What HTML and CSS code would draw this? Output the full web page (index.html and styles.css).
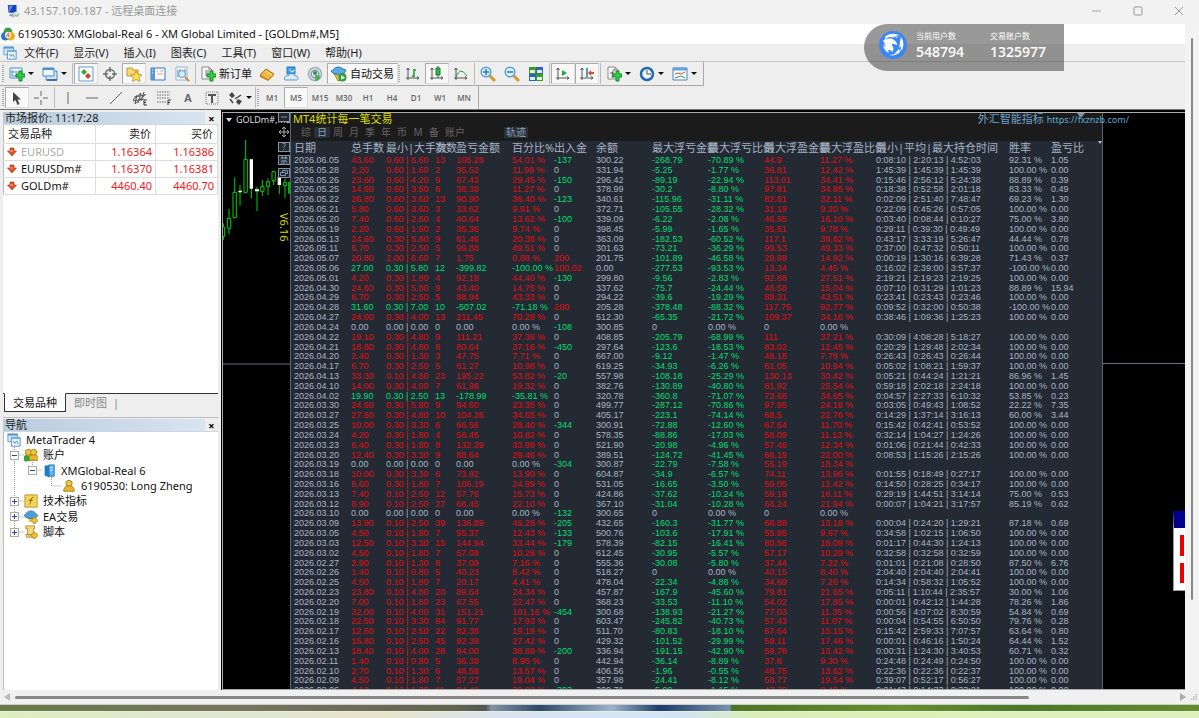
FILE: index.html
```html
<!DOCTYPE html>
<html lang="zh-CN">
<head>
<meta charset="utf-8">
<title>43.157.109.187 - 远程桌面连接</title>
<link rel="stylesheet" href="styles.css">
</head>
<body>
<header class="rdp-bar">
  <svg class="i14" viewBox="0 0 16 16"><path d="M2 1h10v9H3z" fill="#1b3fb4"/><path d="M3 2h5l-4 7z" fill="#5a8af0"/><path d="M5 11h6l3 2-5 2-6-2z" fill="#9aa5b5"/><circle cx="12" cy="12" r="3.5" fill="#d5e8d8"/><path d="M10 12l2 2 3-3" stroke="#4a9a5a" fill="none"/></svg>
  <span>43.157.109.187 - 远程桌面连接</span>
  <div class="win-ctl">
    <button aria-label="最小化"><svg viewBox="0 0 10 10"><path d="M0 5h9" stroke="#aaa" fill="none"/></svg></button>
    <button aria-label="最大化"><svg viewBox="0 0 10 10"><rect x="1" y="1" width="8" height="8" rx="1" stroke="#999" fill="none"/></svg></button>
    <button aria-label="关闭"><svg viewBox="0 0 10 10"><path d="M1 1l8 8M9 1l-8 8" stroke="#999" fill="none"/></svg></button>
  </div>
</header>

<div class="viewport">
<div class="terminal">
  <div class="app-title">
    <svg class="i14" viewBox="0 0 16 16"><circle cx="8" cy="5.500" r="5" fill="#3f9b4c"/><circle cx="5" cy="10.500" r="5" fill="#2d78c4"/><circle cx="11" cy="10.500" r="5" fill="#e8b020"/><circle cx="8" cy="9" r="3.500" fill="#fff4e4"/><path d="M8.500 6.500L6 10h4M8.500 6.500v5" stroke="#e07020" fill="none"/></svg>
    <h1>6190530: XMGlobal-Real 6 - XM Global Limited - [GOLDm#,M5]</h1>
  </div>
  <nav class="menu">
    <svg class="i14" viewBox="0 0 16 16"><use href="#windows"/></svg>
    <button>文件(F)</button><button>显示(V)</button><button>插入(I)</button><button>图表(C)</button><button>工具(T)</button><button>窗口(W)</button><button>帮助(H)</button>
  </nav>

  <div class="toolbar tall">
    <i class="grip"></i>
    <button class="dd" aria-label="新图表"><svg viewBox="0 0 16 16"><path d="M1 2h12v10H1z" fill="#eef6fd" stroke="#4d8fc8"/><path d="M3 4v6h8M3 6h6" stroke="#4d8fc8" fill="none"/><use href="#plus"/></svg></button>
    <button class="dd" aria-label="配置文件"><svg viewBox="0 0 16 16"><path d="M4 5h11v9H4z" fill="#cfe2f5" stroke="#4d8fc8"/><path d="M1 2h11v8H1z" fill="#eef6fd" stroke="#4d8fc8"/><path d="M1 3h11" stroke="#4d8fc8" stroke-width="2"/><path d="M5 14h10" stroke="#3c75aa" stroke-width="2"/></svg></button>
    <i class="sep"></i>
    <button class="on" aria-label="市场报价"><svg viewBox="0 0 16 16"><path d="M1 1h14v14H1z" fill="#fff" stroke="#5f9bd3"/><path d="M6 3l3 3-3 3-3-3z" fill="#2aa83a"/><path d="M10 7l3 3-3 3-3-3z" fill="#d0402a"/></svg></button>
    <button aria-label="数据窗口"><svg viewBox="0 0 16 16"><g stroke="#6d6d6d" fill="none"><circle cx="8" cy="8" r="4.500" stroke-width="1.500"/><path d="M8 1v5M8 10v5M1 8h5M10 8h5" stroke-width="1.500"/></g></svg></button>
    <button class="on" aria-label="导航"><svg viewBox="0 0 16 16"><path d="M1 2h5l1 2h5v6H1z" fill="#f7d774" stroke="#c9973a"/><path d="M10 5l2 3.500 4 .5-3 2.500 1 4-4-2-3.500 2 .8-4L4.500 9 8.500 8.500z" fill="#fbe04a" stroke="#b8862a" stroke-width=".8"/></svg></button>
    <button aria-label="终端"><svg viewBox="0 0 16 16"><path d="M1 2h14v12H1z" fill="#f4f9fe" stroke="#3d78b8"/><path d="M1 2h4v12H1z" fill="#5c96d0"/><path d="M2 4h1M2 7h1M7 5h1" stroke="#fff"/><path d="M7 5h1M10 5h3M7 8h6" stroke="#d8a48c"/></svg></button>
    <button aria-label="策略测试"><svg viewBox="0 0 16 16"><path d="M2 1h11v13H2z" fill="#eef5fb" stroke="#9ab5cd"/><path d="M4 4v7M6 3v5M11 3v4" stroke="#5d8fbe"/><circle cx="8" cy="8" r="3.500" fill="#d6ebfa" stroke="#6696bd"/><path d="M11 11l4 4" stroke="#c8922b" stroke-width="2"/></svg></button>
    <i class="sep"></i>
    <button class="labelled"><svg viewBox="0 0 16 16"><use href="#sheet"/><path d="M5 5h4M5 7h4M5 9h3" stroke="#777"/><use href="#plus"/></svg>新订单</button>
    <button aria-label="MetaEditor"><svg viewBox="0 0 16 16"><path d="M1 9l6-6 8 5-6 6z" fill="#f0b93c" stroke="#a8701c"/><path d="M1 9v2l8 4 6-6V8l-6 6z" fill="#c98720"/><path d="M6 5l7 4" stroke="#fbe09a"/></svg></button>
    <button aria-label="虚拟主机"><svg viewBox="0 0 16 16"><path d="M4 1h8v7H4z" fill="#3fa0ea" stroke="#2a78bb"/><path d="M6 3l3 3 3-2" stroke="#fff" fill="none"/><path d="M2 14c-2-3 1-5 3-4 1-3 6-3 7 0 3-1 4 3 2 4z" fill="#dcebf8" stroke="#5b95cc"/></svg></button>
    <button aria-label="信号"><svg viewBox="0 0 16 16"><g fill="none"><circle cx="8" cy="8" r="6.500" stroke="#9fb0b8" stroke-width="1.600"/><circle cx="8" cy="8" r="3.800" stroke="#7c9cb0" stroke-width="1.600"/></g><circle cx="8" cy="7" r="2" fill="#3a8e4e"/><path d="M8 8v7h2c3-2 3-3 3-5z" fill="#53ad62"/></svg></button>
    <button class="labelled on"><svg viewBox="0 0 16 16"><path d="M3 7l5 3 6-3-2 7-5 1z" fill="#f0c33c" stroke="#a98322"/><path d="M0 5c2 0 3-4 7-4s5 3 8 3c-1 5-13 6-15 1z" fill="#5aa9e2" stroke="#2b74a8"/><circle cx="11.500" cy="11.500" r="4" fill="#22a436"/><path d="M10.200 9.200l4 2.300-4 2.300z" fill="#fff"/></svg>自动交易</button>
    <i class="grip"></i>
    <button aria-label="柱状图"><svg viewBox="0 0 16 16"><use href="#axes"/><path d="M9 3v8M9 4h2M7 10h2" stroke="#279537" stroke-width="1.500"/></svg></button>
    <button class="on" aria-label="阴阳烛"><svg viewBox="0 0 16 16"><use href="#axes"/><path d="M9 0v12" stroke="#1a7b28"/><path d="M7 2h4v7H7z" fill="#2eb944" stroke="#1a7b28"/></svg></button>
    <button aria-label="折线图"><svg viewBox="0 0 16 16"><use href="#axes"/><path d="M3 11c3-7 6-8 11-1" stroke="#279537" fill="none"/></svg></button>
    <i class="sep"></i>
    <button aria-label="放大"><svg viewBox="0 0 16 16"><use href="#lens"/><path d="M6 3v6M3 6h6" stroke="#2f77b5" stroke-width="1.500"/></svg></button>
    <button aria-label="缩小"><svg viewBox="0 0 16 16"><use href="#lens"/><path d="M3 6h6" stroke="#2f77b5" stroke-width="1.500"/></svg></button>
    <button aria-label="平铺"><svg viewBox="0 0 16 16"><path d="M1 1h7v7H1zM8 8h7v7H8z" fill="#3c9b28"/><path d="M8 1h7v7H8zM1 8h7v7H1z" fill="#2d62c0"/><path d="M2 4h5v3H2zM9 4h5v3H9zM2 11h5v3H2zM9 11h5v3H9z" fill="#dff0dc"/></svg></button>
    <i class="sep"></i>
    <button class="on" aria-label="自动滚动"><svg viewBox="0 0 16 16"><use href="#axes"/><path d="M7 4l5 3-5 3z" fill="#2aa53a"/></svg></button>
    <button class="on" aria-label="图表平移"><svg viewBox="0 0 16 16"><use href="#axes"/><path d="M8 2v9" stroke="#2c6fb0" stroke-width="1.500"/><path d="M9 7l3-3v2h3v2h-3v2z" fill="#d0502c"/></svg></button>
    <i class="sep"></i>
    <button class="dd" aria-label="指标"><svg viewBox="0 0 16 16"><use href="#sheet"/><path d="M9 4c-3-1-2 3-3 8M4 7h4" stroke="#555" fill="none"/><use href="#plus"/></svg></button>
    <button class="dd" aria-label="周期"><svg viewBox="0 0 16 16"><circle cx="8" cy="8" r="6" fill="#eef5fc" stroke="#2467b4" stroke-width="2.500"/><path d="M8 4v4h4" stroke="#555" fill="none"/></svg></button>
    <button class="dd" aria-label="模板"><svg viewBox="0 0 16 16"><path d="M1 2h14v12H1z" fill="#f6fafe" stroke="#4d86bd"/><path d="M1 3h14" stroke="#6aa3d8" stroke-width="3"/><path d="M3 8l3-1 3 1 4-2" stroke="#c45a3a" fill="none"/><path d="M3 12l3-1 3-1 4 2" stroke="#3a9a4a" fill="none"/></svg></button>
  </div>

  <div class="toolbar low">
    <i class="grip"></i>
    <button class="on" aria-label="光标"><svg viewBox="0 0 16 16"><path d="M4 2v10l2.500-2 2 5 2-1-2-4.500H12z" fill="#444"/></svg></button>
    <button aria-label="十字准线"><svg viewBox="0 0 16 16"><path d="M8 1v5M8 10v5M1 8h5M10 8h5" stroke="#666"/></svg></button>
    <i class="sep"></i>
    <button aria-label="垂直线"><svg viewBox="0 0 16 16"><path d="M8 2v12" stroke="#666"/></svg></button>
    <button aria-label="水平线"><svg viewBox="0 0 16 16"><path d="M2 8h12" stroke="#666"/></svg></button>
    <button aria-label="趋势线"><svg viewBox="0 0 16 16"><path d="M2 14L14 2" stroke="#666"/></svg></button>
    <button aria-label="等距通道"><svg viewBox="0 0 16 16"><path d="M1 10L9 3M3 14L14 4M2 7l11-2M1 11l11-2M5 5l-2 9M9 3L6 13M12 2L9 11" stroke="#555" fill="none"/><path d="M15 10h-3v5h3M12 12.500h2" stroke="#333" fill="none"/></svg></button>
    <button aria-label="斐波那契"><svg viewBox="0 0 16 16"><path d="M1 2h13M1 5h13M1 8h13M1 12h9" stroke="#666" stroke-dasharray="1.500 1"/><path d="M15 10h-3v5M12 12.500h2" stroke="#333" fill="none"/></svg></button>
    <button class="letter">A</button>
    <button aria-label="文本标签"><svg viewBox="0 0 16 16"><path d="M2 2h12v12H2z" stroke="#777" stroke-dasharray="1 1" fill="none"/><path d="M4 5h8M8 5v8" stroke="#555" stroke-width="2"/></svg></button>
    <button class="dd" aria-label="箭头"><svg viewBox="0 0 16 16"><path d="M5 2l3 4-3 2-3-3zM11 9l4 2-3 4-3-3z" fill="#444"/><path d="M3 9l3 4M8 9l6-4" stroke="#444" stroke-width="1.500"/></svg></button>
    <i class="sep"></i>
    <i class="grip"></i>
    <button>M1</button><button class="on">M5</button><button>M15</button><button>M30</button><button>H1</button><button>H4</button><button>D1</button><button>W1</button><button>MN</button>
  </div>

  <main class="work">
    <aside class="dock">
      <section class="quotes">
        <header class="pane-title"><h2>市场报价: 11:17:28</h2><button aria-label="关闭市场报价">×</button></header>
        <table>
          <thead><tr><th>交易品种</th><th>卖价</th><th>买价</th></tr></thead>
          <tbody>
            <tr class="dim"><td><svg viewBox="0 0 10 10"><use href="#down"/></svg>EURUSD</td><td>1.16364</td><td>1.16386</td></tr>
            <tr><td><svg viewBox="0 0 10 10"><use href="#down"/></svg>EURUSDm#</td><td>1.16370</td><td>1.16381</td></tr>
            <tr><td><svg viewBox="0 0 10 10"><use href="#down"/></svg>GOLDm#</td><td>4460.40</td><td>4460.70</td></tr>
          </tbody>
        </table>
        <div class="dock-tabs"><button class="cur">交易品种</button><button>即时图</button></div>
      </section>
      <section class="navigator">
        <header class="pane-title"><h2>导航</h2><button aria-label="关闭导航">×</button></header>
        <div class="tree">
          <svg class="branches" viewBox="0 0 70 108" preserveAspectRatio="none"><path d="M10.500 15v86M10.500 23h10M10.500 69h10M10.500 85h10M10.500 100h10M28.500 30v8h10M47.500 45v9h10" fill="none" stroke="#999" stroke-dasharray="1 1"/></svg>
          <ul>
            <li class="l0"><svg class="i14" viewBox="0 0 16 16"><use href="#windows"/></svg>MetaTrader 4</li>
            <li class="l1"><b class="box minus"></b><svg class="i14" viewBox="0 0 16 16"><g transform="translate(-3 0)"><use href="#person"/></g><g transform="translate(3 0)"><use href="#person"/></g><circle cx="3" cy="12" r="3.500" fill="#35a53c"/></svg>账户</li>
            <li class="l2"><b class="box minus"></b><svg class="i14" viewBox="0 0 16 16"><path d="M3 2l5-1v14l-5-2z" fill="#1f7cc4"/><path d="M8 1h6v13H8z" fill="#5bb4f0" stroke="#2779b4"/><path d="M9 4h3M9 7h3" stroke="#fff"/></svg>XMGlobal-Real 6</li>
            <li class="l3"><svg class="i14" viewBox="0 0 16 16"><use href="#person"/></svg>6190530: Long Zheng</li>
            <li class="l1"><b class="box plus"></b><svg class="i14" viewBox="0 0 16 16"><path d="M1 1h14v14H1z" fill="#f5d657" stroke="#b58d24"/><path d="M11 4c-4-1-2 5-5 8M5 7h5" stroke="#6b5417" fill="none"/></svg>技术指标</li>
            <li class="l1"><b class="box plus"></b><svg class="i14" viewBox="0 0 16 16"><path d="M4 9h8l-2 5H6z" fill="#f0cb58"/><path d="M0 6c2 0 3-5 8-5s6 5 8 5c-2 5-14 5-16 0z" fill="#4c9fd6" stroke="#2f75a5"/><path d="M12 8l4 4-4 4-4-4z" fill="#f1bf31" stroke="#a97d1b"/></svg>EA交易</li>
            <li class="l1"><b class="box plus"></b><svg class="i14" viewBox="0 0 16 16"><path d="M2 1h10v3h-1v7H4V4H2zM2 11h9v3H3z" fill="#f3d878" stroke="#b48c2c"/><path d="M12 8l4 4-4 4-4-4z" fill="#f1bf31" stroke="#a97d1b"/></svg>脚本</li>
          </ul>
        </div>
      </section>
    </aside>

    <section class="chart">
      <div class="candles">
        <svg class="plot" viewBox="672 24 201 1728" preserveAspectRatio="none">
          <path d="M672 777h201" stroke="#66768a" stroke-width="3"/>
          <g stroke="#00d000" stroke-width="3" fill="#000">
            <path d="M673 355v50M690 312v75M707 218v122M723 240v62M740 105v160M757 163v117M774 245v73M790 225v48M807 220v50M824 197v44M841 215v52M858 220v60"/>
            <path d="M669 366h8v28h-8zM685 340h10v30h-10zM702 262h10v76h-10zM735 163h10v99h-10zM785 245h10v14h-10zM802 230h10v14h-10zM819 200h10v27h-10zM853 232h10v10h-10z"/>
            <path d="M870 230v36" stroke-width="5"/>
          </g>
          <path d="M752 163h10v88h-10zM718 257h11v5h-11zM768 253h12v6h-12zM836 215h10v25h-10z" fill="#fff"/>
        </svg>
        <span class="symbol">GOLDm#,M5</span>
        <div class="side-tools">
          <button aria-label="收起"><svg viewBox="0 0 12 10"><path d="M.5.5h11v9H.5z"/><path d="M3 5h6"/></svg></button>
          <button class="move" aria-label="移动"><svg viewBox="0 0 12 12"><path d="M6 1v10M1 6h10M4 3l2-2 2 2M4 9l2 2 2-2M3 4L1 6l2 2M9 4l2 2-2 2"/></svg></button>
          <button class="boxed">?</button>
          <button class="boxed">禁</button>
          <button aria-label="还原"><svg viewBox="0 0 12 10"><path d="M.5.5h11v9H.5zM4.500 2.500h5v3h-5z"/><path d="M2.500 4.500h5v3h-5z" fill="#1d2733"/></svg></button>
        </div>
        <span class="version">V6.16</span>
      </div>

      <div class="report">
        <header class="report-head">
          <div class="report-title"><h2>MT4统计每一笔交易</h2></div>
          <div class="periods">
            <button>综</button><button class="cur">日</button><button>周</button><button>月</button><button>季</button><button>年</button><button>币</button><button>M</button><button>备</button><button class="wide">账户</button><button class="cur track">轨迹</button>
          </div>
        </header>
        <table class="stats">
          <thead><tr><th>日期</th><th>总手数</th><th>最小|大手数</th><th>次数</th><th>盈亏金额</th><th>百分比%</th><th>出入金</th><th>余额</th><th>最大浮亏金额</th><th>最大浮亏比例</th><th>最大浮盈金额</th><th>最大浮盈比例</th><th>最小|平均|最大持仓时间</th><th>胜率</th><th>盈亏比</th></tr></thead>
          <tbody id="rows"></tbody>
        </table>
      </div>
      <div class="margin">
        <div class="site">外汇智能指标 <a href="#">https://fxznzb.com/</a></div>
        <svg class="marker" viewBox="0 0 8 5"><path d="M0 0h8L4 5z" fill="#8394a4"/></svg>
        <svg class="scroll-mark" viewBox="0 0 4 3"><path d="M0 0h4L2 3z" fill="#b8c0c8"/></svg>
        <div class="alert"><i></i><i></i></div>
      </div>
    </section>
  </main>
</div>
<div class="vscroll"><i></i></div>
</div>
<footer class="hscroll"><svg viewBox="0 0 6 8"><path d="M6 0v8L0 4z" fill="#bbb"/></svg><i></i><svg viewBox="0 0 6 8"><path d="M0 0v8l6-4z" fill="#aaa"/></svg><svg viewBox="0 0 8 8"><path d="M6 0h2v2H6zM3 3h2v2H3zM6 3h2v2H6zM0 6h2v2H0zM3 6h2v2H3zM6 6h2v2H6z" fill="#bbb"/></svg></footer>
<div class="wallpaper"></div>
<div class="taskbar"></div>

<aside class="badge">
  <svg viewBox="0 0 28 28"><circle cx="14" cy="14" r="14" fill="#3b86f7"/><path d="M6 6c4-4 11-4 15-1l-4-1 2 3-5-2 1 2c-4-2-7-1-9 2z" fill="#fff"/><path d="M4 10c3-3 8-3 11-1 2 1 3 3 3 5l-3-1c-2-1-3 1-1 3 1 2 0 4-1 5-1-2-3-2-4-2l1 3c-3-1-5-4-6-7l3 1-3-3 3 1-3-4z" fill="#fff"/><path d="M22 6c3 4 3 9 1 13l-2 1c1-2 1-3 1-5l-2 2c1-4 1-8 2-11zM21 21c-3 3-7 4-11 3 4 0 6-1 8-3l-3 .5c3-1 4-2 5-4z" fill="#fff"/></svg>
  <dl><dt>当前用户数</dt><dd>548794</dd></dl>
  <dl><dt>交易账户数</dt><dd>1325977</dd></dl>
</aside>

<svg class="defs" aria-hidden="true"><defs>
  <g id="plus"><path d="M8 7h3v-3h3v3h3v3h-3v4h-3v-4H8z" transform="translate(-1 1)" fill="#2fd040" stroke="#128a22"/></g>
  <g id="sheet"><path d="M2 1h7l3 3v9H2z" fill="#fafafa" stroke="#888"/><path d="M9 1v3h3" fill="none" stroke="#888"/></g>
  <g id="axes"><path d="M3 2v12M1 12h13M1.500 4L3 2l1.500 2M12 10.500l2 1.500-2 1.500" fill="none" stroke="#555"/></g>
  <g id="lens"><path d="M9 9l6 6" stroke="#d19b2b" stroke-width="3"/><circle cx="6" cy="6" r="4.800" fill="#d9effc" stroke="#5c9fd3" stroke-width="1.500"/></g>
  <g id="windows"><path d="M1 1h11v9H1z" fill="#d9ebfa" stroke="#5798d4"/><path d="M1 2h11" stroke="#5798d4" stroke-width="2"/><path d="M5 5h10v10H5z" fill="#f3f9fe" stroke="#4285c5"/><path d="M5 6h10" stroke="#78b4e6" stroke-width="2"/><path d="M7 9l2 3 2-3 2 4" fill="none" stroke="#4285c5"/></g>
  <g id="down"><path d="M3 1h4v3h2.500L5 9 .5 4H3z" fill="#e2512d" stroke="#9c3015" stroke-width=".6"/><path d="M3 4h3" stroke="#ffc09a"/></g>
  <g id="person"><circle cx="8" cy="5" r="3.500" fill="#f0c63c" stroke="#a37b16"/><path d="M2 14c0-6 4-6 6-6s6 0 6 6z" fill="#e8b72c" stroke="#a37b16"/></g>
</defs></svg>
<script src="rows.js"></script>
</body>
</html>
```
FILE: styles.css
```css
* { box-sizing: border-box; }
body { margin: 0; height: 100vh; display: flex; flex-direction: column; overflow: hidden; font: 11px/14px "Noto Sans", "Noto Sans CJK SC", sans-serif; color: #222; background: #f2f2f2; }
h1, h2 { margin: 0; font: inherit; white-space: nowrap; }
button { margin: 0; padding: 0; border: 0; background: none; font: inherit; color: inherit; }
svg { display: block; flex: none; }
.defs { position: absolute; width: 0; height: 0; }
.i14 { width: 14px; height: 14px; }

.rdp-bar { flex: none; height: 24px; display: flex; align-items: center; gap: 4px; padding: 0 15px 2px 6px; color: #999; }
.win-ctl { margin-left: auto; display: flex; gap: 31px; }
.win-ctl svg { width: 10px; height: 10px; }

.viewport { flex: 1; min-height: 0; display: flex; }
.terminal { flex: 1; min-width: 0; display: flex; flex-direction: column; background: #eee; }
.vscroll { width: 14px; padding: 14px 6px 90px; display: flex; background: #f3f3f3; }
.vscroll i { width: 2px; border-radius: 1px; background: #888; }

.app-title { flex: none; height: 20px; display: flex; align-items: center; gap: 3px; padding-left: 1px; background: #fff; color: #111; }
.menu { flex: none; height: 18px; display: flex; align-items: center; padding-left: 3px; border-bottom: 1px solid #c4c4c4; }
.menu button { margin-left: 7px; margin-right: 8px; white-space: nowrap; }

.toolbar { flex: none; display: flex; align-items: stretch; align-self: flex-start; padding: 1px 2px 1px 2px; border-right: 1px solid #aaa; }
.tall { height: 24px; border-bottom: 1px solid #aaa; }
.low { height: 23px; }
.toolbar svg { width: 16px; height: 16px; }
.toolbar button { width: 24px; display: flex; align-items: center; justify-content: center; }
.toolbar .on { background: #f8f8f8; border: 1px solid #ddd; border-top-color: #aaa; border-left-color: #aaa; }
.toolbar .dd { width: 33px; gap: 3px; }
.toolbar .dd::after { content: ""; border: 3px solid transparent; border-top-color: #111; border-bottom: 0; }
.toolbar .labelled { width: auto; gap: 3px; padding: 0 3px; white-space: nowrap; color: #111; }
.grip { width: 2px; margin: 2px 1px 2px 0; background: repeating-linear-gradient(#aaa 0 1px, transparent 1px 2px); }
.sep { width: 1px; margin: 0 1px; background: #bbb; }
.low button { font: 600 8px/10px "Open Sans", sans-serif; color: #666; }
.low .dd { width: 30px; }
.low .letter { font: 700 11px/12px "Liberation Sans", Arial, sans-serif; }

.work { flex: 1; min-height: 0; display: flex; border-top: 1px solid #777; }
.dock { flex: none; width: 221px; display: flex; flex-direction: column; padding: 2px 3px 0; }
.pane-title { flex: none; height: 13px; display: flex; justify-content: space-between; background: linear-gradient(90deg, #b9cbdc, #dae6f2); border: 1px solid #ccd6e0; border-width: 0 0 1px; }
.pane-title h2 { line-height: 12px; padding-left: 2px; }
.pane-title button { width: 13px; line-height: 11px; background: #eee; color: #000; font-weight: 700; }
.quotes { flex: none; height: 305px; display: flex; flex-direction: column; background: #fff; }
.quotes table { border-collapse: collapse; width: 100%; table-layout: fixed; border-left: 1px solid #bbb; }
.quotes tr { height: 17px; border-bottom: 1px solid #ddd; }
.quotes th { font-weight: 400; height: 18px; padding: 0 4px 0 4px; border-right: 1px solid #ddd; text-align: right; line-height: 14px; }
.quotes th:first-child { width: 92px; text-align: left; }
.quotes th:nth-child(2) { width: 60px; }
.quotes td { padding: 0 3px; text-align: right; color: #f02020; border-right: 1px solid #ddd; line-height: 14px; }
.quotes td:first-child { text-align: left; color: #111; }
.quotes td svg { display: inline-block; width: 10px; height: 10px; margin-right: 4px; vertical-align: -1px; }
.quotes .dim td:first-child { color: #aaa; }
.dock-tabs { margin-top: auto; height: 24px; padding: 0 0 5px 1px; display: flex; background: #eee; border-top: 1px solid #333; }
.dock-tabs button { padding: 0 8px; color: #888; }
.dock-tabs button + button::after { content: "|"; margin-left: 6px; }
.dock-tabs .cur { background: #fff; color: #111; border: 1px solid #333; border-top-color: #fff; margin-top: -1px; }
.navigator { flex: 1; min-height: 0; display: flex; flex-direction: column; border-top: 1px solid #bbb; padding-top: 1px; }
.tree { position: relative; flex: 1; background: #fff; border: 1px solid #bbb; border-width: 0 0 0 1px; }
.tree ul { position: relative; list-style: none; margin: 0; padding: 0; height: 108px; display: grid; grid-template-rows: repeat(7, 1fr); }
.branches { position: absolute; top: 0; left: 0; width: 70px; height: 108px; }
.tree li { display: flex; align-items: center; gap: 5px; white-space: nowrap; color: #111; }
.l0 { padding-left: 3px; }
.l1 { padding-left: 6px; }
.l2 { padding-left: 24px; }
.l3 { padding-left: 58px; }
.box { width: 9px; height: 9px; border: 1px solid #aaa; background: linear-gradient(#2a4a8a, #2a4a8a) center / 5px 1px no-repeat, #fff; }
.plus { background: linear-gradient(#2a4a8a, #2a4a8a) center / 5px 1px no-repeat, linear-gradient(#2a4a8a, #2a4a8a) center / 1px 5px no-repeat, #fff; }

.chart { position: relative; flex: 1; min-width: 0; display: flex; background: #000; border: 2px solid #000; border-width: 2px 0 0 1px; overflow: hidden; }
.chart::before { content: ""; position: absolute; inset: 0; border: 1px solid #aaa; border-right: 0; z-index: 2; pointer-events: none; }
.candles { position: relative; flex: none; width: 68px; display: flex; flex-direction: column; align-items: flex-end; overflow: hidden; }
.plot { position: absolute; top: 1px; left: 1px; width: 67px; height: 576px; }
.symbol { position: absolute; top: 1px; left: 14px; font-size: 9px; color: #ddd; }
.symbol::before { content: ""; position: absolute; left: -10px; top: 5px; border: 3px solid transparent; border-top: 4px solid #ddd; border-bottom: 0; }
.side-tools { position: relative; display: flex; flex-direction: column; gap: 3px; width: 12px; }
.side-tools svg { width: 12px; height: 10px; fill: none; stroke: #8593a3; }
.side-tools button { height: 10px; background: #1d2733; }
.side-tools .move { height: 14px; background: none; }
.side-tools .move svg { height: 14px; stroke: #aaa; }
.side-tools .boxed { border: 1px solid #8593a3; color: #9ba9b8; font-size: 8px; line-height: 8px; }
.version { position: relative; margin-top: 35px; writing-mode: vertical-rl; font-size: 11px; line-height: 12px; color: #d8d800; }

.report { flex: 1; min-width: 0; display: flex; flex-direction: column; background: #232a33; border: 1px solid #56657a; border-width: 0 1px 0 1px; overflow: hidden; }
.report-head { flex: none; height: 29px; padding: 0 2px; background: #1b1b1b; }
.report-title { height: 15px; color: #dede00; }
.periods { display: flex; padding-left: 5px; color: #666; font-size: 10px; line-height: 11px; }
.periods button { flex: none; width: 16px; text-align: center; }
.periods .wide { width: 26px; }
.periods .cur { background: #26303a; color: #8c9fb2; }
.periods .track { width: 24px; margin-left: 36px; }
.stats { flex: 1; min-height: 0; margin-bottom: -5px; display: flex; flex-direction: column; padding-left: 3px; }
.stats tr { display: grid; grid-template-columns: 57px 35px 49px 21px 56px 42px 42px 56px 56px 56px 56px 56px 133px 42px 42px; }
.stats th, .stats td { padding: 0; text-align: left; white-space: nowrap; font-weight: 400; min-width: 0; }
.stats th { color: #a6b3c3; line-height: 14px; }
.stats tbody { flex: 1; min-height: 0; display: grid; grid-auto-rows: minmax(0, 1fr); }
.stats td { font: 9px/10px "Liberation Sans", Arial, sans-serif; color: #a9b5c5; }
.stats .up { color: #e20a12; }
.stats .down { color: #00de70; }

.margin { position: relative; flex: none; width: 82px; background: linear-gradient(#66768a, #66768a) 0 251px / 100% 1px no-repeat; }
.site { position: absolute; right: 56px; top: 0; white-space: nowrap; color: #6ba3c8; }
.site a { color: #5cadd6; font-size: 9px; text-decoration: none; }
.marker { position: absolute; left: -26px; top: 1px; width: 8px; height: 5px; }
.scroll-mark { position: absolute; left: -5px; top: 29px; width: 4px; height: 3px; }
.alert { position: absolute; right: 0; bottom: 99px; width: 12px; height: 80px; padding: 7px 1px 7px 6px; display: grid; gap: 7px; background: #fff; border: 1px solid #999; border-top: 17px solid #00008b; border-right: 0; }
.alert i { background: #e80000; }

.hscroll { flex: none; height: 15px; display: flex; align-items: center; gap: 5px; padding: 0 2px 0 4px; background: #f0f0f0; border-bottom: 1px solid #ccc; }
.hscroll i { width: 85%; height: 3px; margin-right: auto; border-radius: 2px; background: #888; }
.hscroll svg { width: 6px; height: 8px; }
.wallpaper { flex: none; height: 6px; background: linear-gradient(90deg, #6a7a48, #77745f 20%, #62644f 38%, #555 40.500%, #8193a4 41%, #2e4a6a 45%, #9bb4ca 51%, #1c3c6a 55%, #7891ad 60.900%, #4d7422 61%, #66902c 75%, #4b7824 85%, #638d2c); }
.taskbar { flex: none; height: 7px; background: linear-gradient(90deg, #dcefc0, #dfe5d3 22%, #e8e3c8 31%, #d8e4f0 42%, #d2e4f3 57%, #d8f0b8 63%, #dcf2bc); border-top: 1px solid #e8f0e0; }

.badge { position: absolute; top: 24px; right: 135px; width: 200px; height: 47px; display: flex; align-items: center; padding-left: 15px; border-radius: 24px 0 0 24px; background: rgba(70, 70, 70, .55); color: #fff; }
.badge svg { width: 28px; height: 28px; margin: 0 9px 5px 0; }
.badge dl { margin: 0 0 6px; width: 76px; }
.badge dt { font-size: 8px; line-height: 14px; white-space: nowrap; }
.badge dd { margin: 0; font: 600 14px/18px "Open Sans", sans-serif; }
```
FILE: rows.js
```js
const records = `
2026.06.05;43.60;0.60 | 6.60;13;105.28;54.01;-137;300.22;-268.79;-70.89;44.9;11.27;0:08:10 | 2:20:13 | 4:52:03;92.31;1.05
2026.05.28;2.20;0.60 | 1.60;2;35.52;11.98;0;331.94;-5.25;-1.77;36.81;12.42;1:45:39 | 1:45:39 | 1:45:39;100.00;0.00
2026.05.26;23.60;0.60 | 4.20;9;67.43;29.45;-150;296.42;-89.19;-22.94;113.01;34.41;0:15:46 | 2:56:12 | 5:24:38;88.89;0.39
2026.05.25;14.60;0.60 | 3.60;6;38.38;11.27;0;378.99;-30.2;-8.80;97.81;34.85;0:18:38 | 0:52:58 | 2:01:18;83.33;0.49
2026.05.22;26.80;0.60 | 3.60;13;90.90;36.40;-123;340.61;-115.96;-31.11;82.81;32.11;0:02:09 | 2:51:40 | 7:48:47;69.23;1.30
2026.05.21;5.80;0.60 | 3.60;3;33.62;9.91;0;372.71;-105.55;-28.32;31.19;9.20;0:22:09 | 0:45:26 | 0:57:05;100.00;0.00
2026.05.20;7.40;0.60 | 2.60;4;40.64;13.62;-100;339.09;-6.22;-2.08;46.95;16.10;0:03:40 | 0:08:44 | 0:10:27;75.00;3.80
2026.05.19;2.20;0.60 | 1.60;2;35.36;9.74;0;398.45;-5.99;-1.65;35.51;9.78;0:29:11 | 0:39:30 | 0:49:49;100.00;0.00
2026.05.13;24.60;0.30 | 5.80;9;61.46;20.38;0;363.09;-182.53;-60.52;117.1;38.82;0:43:17 | 3:33:19 | 5:26:47;44.44;0.78
2026.05.11;6.70;0.30 | 2.50;5;99.88;49.51;0;301.63;-73.21;-36.29;99.53;49.33;0:37:00 | 0:47:32 | 0:50:11;100.00;0.00
2026.05.07;20.80;2.00 | 6.60;7;1.75;0.88;200;201.75;-101.89;-46.58;29.98;14.92;0:00:19 | 1:30:16 | 6:39:28;71.43;0.37
2026.05.06;27.00;0.30 | 5.80;12;-399.82;-100.00;100.02;0.00;-277.53;-93.53;13.34;4.45;0:16:02 | 2:39:00 | 3:57:37;-100.00;0.00
2026.05.01;4.20;0.30 | 1.80;4;92.18;44.40;-130;299.80;-9.56;-2.83;92.88;27.51;2:19:21 | 2:19:23 | 2:19:25;100.00;0.00
2026.04.30;24.60;0.30 | 5.80;9;43.40;14.75;0;337.62;-75.7;-24.44;46.58;15.04;0:07:10 | 0:31:29 | 1:01:23;88.89;15.94
2026.04.29;6.70;0.30 | 2.50;5;88.94;43.33;0;294.22;-39.6;-19.29;89.31;43.51;0:23:41 | 0:23:43 | 0:23:46;100.00;0.00
2026.04.28;31.60;0.30 | 7.00;10;-507.02;-71.18;200;205.28;-378.48;-88.32;117.75;92.77;0:09:52 | 0:32:00 | 0:50:38;-100.00;0.00
2026.04.27;24.00;0.30 | 4.00;13;211.45;70.28;0;512.30;-65.35;-21.72;109.37;34.16;0:38:46 | 1:09:36 | 1:25:23;100.00;0.00
2026.04.24;0.00;0.00 | 0.00;0;0.00;0.00;-108;300.85;0;0.00;0;0.00;;;
2026.04.22;19.10;0.30 | 4.80;9;111.21;37.36;0;408.85;-205.79;-68.99;111;37.21;0:30:09 | 4:08:28 | 5:18:27;100.00;0.00
2026.04.21;18.80;0.30 | 4.80;8;80.64;37.16;-450;297.64;-123.6;-18.53;83.02;12.45;0:20:29 | 1:29:48 | 2:02:34;100.00;0.00
2026.04.20;2.40;0.30 | 1.30;3;47.75;7.71;0;667.00;-9.12;-1.47;48.18;7.78;0:26:43 | 0:26:43 | 0:26:44;100.00;0.00
2026.04.17;6.70;0.30 | 2.50;5;61.27;10.98;0;619.25;-34.93;-6.26;61.05;10.94;0:05:02 | 1:08:21 | 1:59:37;100.00;0.00
2026.04.13;33.30;0.10 | 4.80;23;195.22;53.82;-20;557.98;-108.18;-25.29;130.13;30.42;0:05:21 | 0:44:24 | 1:21:21;86.96;1.45
2026.04.10;14.00;0.30 | 4.00;7;61.98;19.32;0;382.76;-130.89;-40.80;81.92;25.54;0:59:18 | 2:02:18 | 2:24:18;100.00;0.00
2026.04.02;19.90;0.30 | 2.50;13;-178.99;-35.81;0;320.78;-360.8;-71.07;73.68;34.65;0:04:57 | 2:27:33 | 6:10:32;53.85;0.23
2026.03.30;24.60;0.30 | 5.80;9;94.60;23.35;0;499.77;-287.12;-70.86;97.95;24.18;0:03:05 | 0:49:43 | 1:08:52;22.22;7.35
2026.03.27;27.60;0.30 | 4.80;10;104.26;34.65;0;405.17;-223.1;-74.14;68.5;22.76;0:14:29 | 1:37:14 | 3:16:13;60.00;3.44
2026.03.25;10.00;0.30 | 3.30;6;66.56;28.40;-344;300.91;-72.88;-12.60;67.64;11.70;0:15:42 | 0:42:41 | 0:53:52;100.00;0.00
2026.03.24;4.20;0.30 | 1.80;4;56.45;10.82;0;578.35;-88.86;-17.03;58.09;11.13;0:32:14 | 1:04:27 | 1:24:26;100.00;0.00
2026.03.23;6.40;0.30 | 1.80;8;132.39;33.99;0;521.90;-20.98;-4.96;57.46;12.34;0:01:06 | 0:21:44 | 0:42:33;100.00;0.00
2026.03.20;12.40;0.30 | 3.30;9;88.64;29.46;0;389.51;-124.72;-41.45;66.19;22.00;0:08:53 | 1:15:26 | 2:15:26;100.00;0.00
2026.03.19;0.00;0.00 | 0.00;0;0.00;0.00;-304;300.87;-22.79;-7.58;55.19;18.34;;;
2026.03.18;10.00;0.30 | 3.30;6;73.82;13.90;0;604.87;-34.9;-6.57;74.11;13.96;0:01:55 | 0:18:49 | 0:27:17;100.00;0.00
2026.03.16;6.60;0.30 | 1.80;7;106.19;24.99;0;531.05;-16.65;-3.50;59.05;12.42;0:14:50 | 0:28:25 | 0:34:17;100.00;0.00
2026.03.13;7.40;0.10 | 2.50;12;57.76;15.73;0;424.86;-37.62;-10.24;59.18;16.11;0:29:19 | 1:44:51 | 3:14:14;75.00;0.53
2026.03.12;8.90;0.10 | 2.50;27;66.45;22.10;0;367.10;-31.04;-10.28;66.24;21.94;0:00:07 | 1:04:21 | 3:17:57;85.19;0.62
2026.03.10;0.00;0.00 | 0.00;0;0.00;0.00;-132;300.65;0;0.00;0;0.00;;;
2026.03.09;13.90;0.10 | 2.50;39;136.89;46.28;-205;432.65;-160.3;-31.77;66.88;13.18;0:00:04 | 0:24:20 | 1:29:21;87.18;0.69
2026.03.05;4.50;0.10 | 1.80;7;55.37;12.43;-133;500.76;-103.6;-17.91;55.95;9.67;0:34:58 | 1:02:15 | 1:06:50;100.00;0.00
2026.03.03;12.50;0.10 | 3.30;15;144.94;33.44;-179;578.39;-82.15;-16.41;80.56;16.09;0:01:17 | 0:44:30 | 1:24:13;100.00;0.00
2026.03.02;4.50;0.10 | 1.80;7;57.09;10.28;0;612.45;-30.95;-5.57;57.17;10.29;0:32:58 | 0:32:58 | 0:32:59;100.00;0.00
2026.02.27;2.90;0.10 | 1.30;8;37.09;7.16;0;555.36;-30.08;-5.80;37.44;7.22;0:01:01 | 0:21:08 | 0:28:50;87.50;6.76
2026.02.26;1.40;0.10 | 0.80;5;40.23;8.42;0;518.27;0;0.00;40.15;8.40;2:04:40 | 2:04:40 | 2:04:41;100.00;0.00
2026.02.25;4.50;0.10 | 1.80;7;20.17;4.41;0;478.04;-22.34;-4.88;34.69;7.26;0:14:34 | 0:58:32 | 1:05:52;100.00;0.00
2026.02.23;23.80;0.10 | 4.80;20;89.64;24.34;0;457.87;-167.9;-45.60;79.81;21.65;0:05:11 | 1:10:44 | 2:35:57;30.00;1.06
2026.02.20;7.00;0.10 | 1.80;23;67.55;22.47;0;368.23;-33.53;-11.10;54.02;17.85;0:00:01 | 0:42:12 | 1:44:28;78.26;1.86
2026.02.19;32.00;0.10 | 4.00;31;151.21;101.16;-454;300.68;-138.93;-21.27;77.03;11.35;0:00:56 | 4:07:02 | 8:30:59;54.84;0.69
2026.02.18;22.50;0.10 | 3.30;84;91.77;17.93;0;603.47;-245.82;-40.73;57.43;11.07;0:00:04 | 0:54:55 | 6:50:50;79.76;0.28
2026.02.17;12.60;0.10 | 2.50;22;82.38;19.19;0;511.70;-80.83;-18.10;67.64;15.15;0:15:42 | 2:59:33 | 7:07:57;63.64;0.80
2026.02.16;16.80;0.10 | 2.50;45;92.38;27.42;0;429.32;-101.52;-29.99;59.11;17.46;0:00:01 | 0:46:16 | 1:50:24;64.44;1.52
2026.02.13;18.40;0.10 | 4.00;28;94.00;38.69;-200;336.94;-191.15;-42.90;59.78;13.42;0:00:31 | 1:24:30 | 3:40:53;60.71;0.32
2026.02.11;1.40;0.10 | 0.80;5;36.38;8.95;0;442.94;-36.14;-8.89;37.8;9.30;0:24:48 | 0:24:49 | 0:24:50;100.00;0.00
2026.02.10;2.70;0.10 | 1.30;6;48.58;13.57;0;406.56;-1.96;-0.55;48.75;13.62;0:22:36 | 0:22:36 | 0:22:37;100.00;0.00
2026.02.09;4.50;0.10 | 1.80;7;57.27;19.04;0;357.98;-24.41;-8.12;58.77;19.54;0:39:07 | 0:52:17 | 0:56:27;100.00;0.00
2026.02.06;4.10;0.10 | 1.30;11;84.49;39.02;-303;300.71;-5.99;-1.15;47.39;8.49;0:01:43 | 0:14:33 | 0:33:21;100.00;0.00`;

const percentColumns = [5, 9, 11, 13];
const tone = value => (+value > 0 ? "up" : +value < 0 ? "down" : "");
const body = document.getElementById("rows");

for (const line of records.trim().split("\n")) {
  const fields = line.split(";");
  const row = body.insertRow();
  fields.forEach((value, i) => {
    const cell = row.insertCell();
    cell.textContent = value && percentColumns.includes(i) ? value + " %" : value;
    if (i >= 1 && i <= 5) cell.className = tone(fields[4]);
    if (i === 6 || (i >= 8 && i <= 11)) cell.className = tone(value);
  });
}
```
